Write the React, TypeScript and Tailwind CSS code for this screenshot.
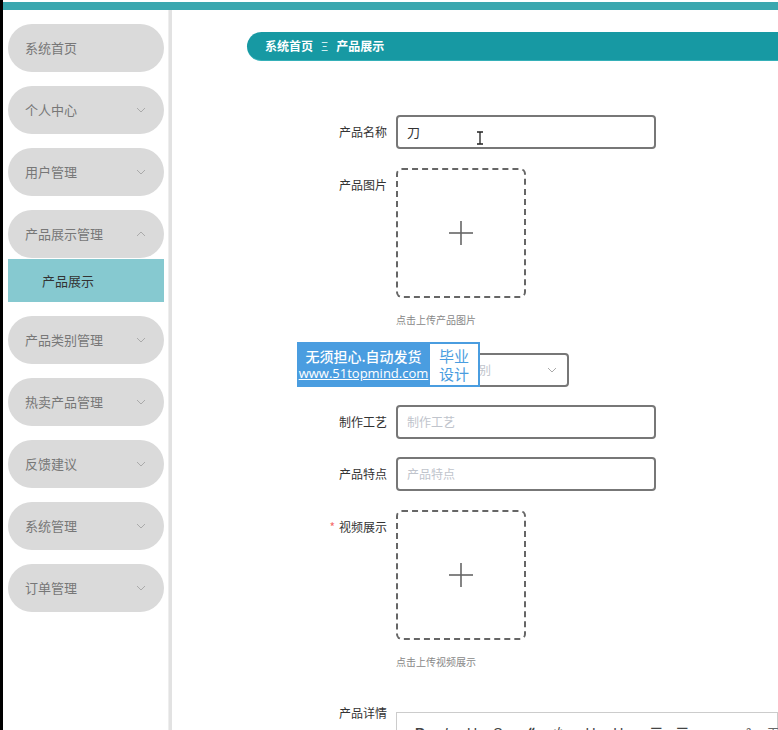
import React from "react";

const font = { fontFamily: '"Noto Sans CJK SC", "Noto Sans", sans-serif' };

function Chevron({ up }: { up?: boolean }) {
  return (
    <svg width="10" height="6" viewBox="0 0 10 6" className="text-[#aaa]">
      {up ? (
        <polyline points="1,5 5,1 9,5" fill="none" stroke="currentColor" strokeWidth="1" />
      ) : (
        <polyline points="1,1 5,5 9,1" fill="none" stroke="currentColor" strokeWidth="1" />
      )}
    </svg>
  );
}

function Pill({ label, chevron, up }: { label: string; chevron?: boolean; up?: boolean }) {
  return (
    <div className="flex h-[48px] shrink-0 items-center justify-between rounded-full bg-[#dadada] pl-[17px] pr-[18px]">
      <span className="text-[13px] text-[#777]">{label}</span>
      {chevron && <Chevron up={up} />}
    </div>
  );
}

function Label({ text, required }: { text: string; required?: boolean }) {
  return (
    <div className="w-[96px] shrink-0 pr-[9px] text-right text-[12px] leading-[34px] text-[#333]">
      {required && <span className="mr-[4px] text-[#f56c6c]">*</span>}
      {text}
    </div>
  );
}

function Upload() {
  return (
    <div className="flex h-[130px] w-[130px] items-center justify-center rounded-[6px] border-2 border-dashed border-[#666]">
      <svg width="26" height="26" viewBox="0 0 26 26">
        <line x1="13" y1="1" x2="13" y2="25" stroke="#666" strokeWidth="1.6" />
        <line x1="1" y1="13" x2="25" y2="13" stroke="#666" strokeWidth="1.6" />
      </svg>
    </div>
  );
}

function TextInput({ placeholder, value }: { placeholder?: string; value?: string }) {
  return (
    <div className="relative flex h-[34px] w-[260px] items-center rounded-[4px] border-2 border-[#777] pl-[9px] text-[12px]">
      {value ? <span className="text-[13px] text-[#333]">{value}</span> : <span className="text-[#c0c4cc]">{placeholder}</span>}
    </div>
  );
}

export default function App() {
  const menus = [
    { label: "系统首页", chevron: false },
    { label: "个人中心", chevron: true },
    { label: "用户管理", chevron: true },
  ];
  const menus2 = ["产品类别管理", "热卖产品管理", "反馈建议", "系统管理", "订单管理"];
  return (
    <div className="flex h-[730px] w-full overflow-hidden bg-white" style={font}>
      <div className="h-full w-[3px] shrink-0 bg-black" />
      <div className="flex min-w-0 flex-1 flex-col">
        <div className="h-[2px] shrink-0 bg-white" />
        <div className="h-[8px] shrink-0 bg-[#3aa7af]" />
        <div className="flex min-h-0 flex-1">
          {/* sidebar */}
          <div className="flex w-[165px] shrink-0 flex-col gap-[14px] pl-[5px] pr-[4px] pt-[14px]">
            {menus.map((m) => (
              <Pill key={m.label} label={m.label} chevron={m.chevron} />
            ))}
            <div className="flex shrink-0 flex-col">
              <Pill label="产品展示管理" chevron up />
              <div className="mt-[1px] flex h-[43px] shrink-0 items-center bg-[#86c9d0] pl-[34px] text-[13px] text-[#333]">产品展示</div>
            </div>
            {menus2.map((m) => (
              <Pill key={m} label={m} chevron />
            ))}
          </div>
          <div className="w-[4px] shrink-0 border-l border-[#eee] bg-[#e2e2e2]" />
          {/* main */}
          <div className="min-w-0 flex-1 overflow-hidden">
            <div className="ml-[75px] mt-[22px] flex h-[29px] items-center rounded-l-full border-b border-[#35b0b8] bg-[#1799a3] pl-[18px] text-[12px] font-bold text-white">
              <span>系统首页</span>
              <span className="mx-[8px] font-normal text-[#cfeef0]">Ξ</span>
              <span>产品展示</span>
            </div>
            <div className="ml-[128px] pt-[54px]">
              <div className="flex items-start">
                <Label text="产品名称" />
                <div className="relative">
                  <TextInput value="刀" />
                  <svg className="absolute left-[80px] top-[16px]" width="8" height="14" viewBox="0 0 8 14">
                    <path d="M1 1h6M4 1v12M1 13h6" stroke="#222" strokeWidth="1.3" fill="none" />
                  </svg>
                </div>
              </div>
              <div className="mt-[19px] flex items-start">
                <Label text="产品图片" />
                <div className="flex flex-col">
                  <Upload />
                  <div className="mt-[14px] text-[10px] leading-[16px] text-[#888]">点击上传产品图片</div>
                </div>
              </div>
              <div className="relative mt-[25px] flex items-start">
                <Label text="产品类别" />
                <div className="flex h-[34px] w-[173px] items-center justify-between rounded-[4px] border-2 border-[#777] pl-[9px] pr-[10px] text-[12px] text-[#c0c4cc]">
                  <span>请选择产品类别</span>
                  <Chevron />
                </div>
                <div className="absolute left-[-3px] top-[-11px] flex h-[45px] w-[183px] bg-[#4a9de0]">
                  <div className="flex w-[133px] flex-col items-center justify-center text-white">
                    <span className="text-[14px] font-medium leading-[18px]">无须担心.自动发货</span>
                    <span className="text-[13px] font-medium leading-[17px] underline" style={{ fontFamily: '"Open Sans", sans-serif' }}>
                      www.51topmind.com
                    </span>
                  </div>
                  <div className="my-[2px] mr-[2px] flex flex-1 flex-col items-center justify-center bg-white text-[15px] leading-[18px] text-[#4a9de0]">
                    <span>毕业</span>
                    <span>设计</span>
                  </div>
                </div>
              </div>
              <div className="mt-[18px] flex items-start">
                <Label text="制作工艺" />
                <TextInput placeholder="制作工艺" />
              </div>
              <div className="mt-[18px] flex items-start">
                <Label text="产品特点" />
                <TextInput placeholder="产品特点" />
              </div>
              <div className="mt-[19px] flex items-start">
                <Label text="视频展示" required />
                <div className="flex flex-col">
                  <Upload />
                  <div className="mt-[14px] text-[10px] leading-[16px] text-[#888]">点击上传视频展示</div>
                </div>
              </div>
              <div className="mt-[26px] flex items-start">
                <Label text="产品详情" />
                <div className="mt-[16px] min-w-0 flex-1 border border-[#ccc] pl-[10px] pt-[10px]">
                  <div className="flex text-[14px] leading-[20px] text-[#444]" style={{ fontFamily: '"Liberation Sans", sans-serif' }}>
                    <div className="flex">
                      <span className="w-[26px] text-center font-bold">B</span>
                      <span className="w-[26px] text-center italic">I</span>
                      <span className="w-[26px] text-center underline">U</span>
                      <span className="w-[26px] text-center line-through">S</span>
                    </div>
                    <div className="ml-[8px] flex">
                      <span className="w-[26px] text-center font-bold">❝</span>
                      <span className="w-[26px] text-center">&lt;/&gt;</span>
                    </div>
                    <div className="ml-[8px] flex">
                      <span className="w-[28px] text-center">H₁</span>
                      <span className="w-[28px] text-center">H₂</span>
                    </div>
                    <div className="ml-[8px] flex">
                      <span className="w-[26px] text-center">☰</span>
                      <span className="w-[26px] text-center">☰</span>
                    </div>
                    <div className="ml-[8px] flex">
                      <span className="w-[28px] text-center">x₂</span>
                      <span className="w-[28px] text-center">x²</span>
                    </div>
                    <div className="ml-[4px] flex">
                      <span className="w-[20px] text-center">⊤</span>
                    </div>
                  </div>
                  <div className="h-[40px]" />
                </div>
              </div>
            </div>
          </div>
        </div>
      </div>
    </div>
  );
}
